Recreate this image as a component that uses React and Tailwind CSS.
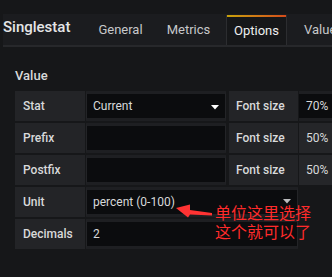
import React from 'react';

const Caret = ({ className }) => (
  <svg width="8" height="5" viewBox="0 0 8 5" className={className}>
    <path d="M0 0 L8 0 L4 4.5 Z" fill="currentColor" />
  </svg>
);

const Label = ({ children, w = 'w-[70px]', pl = 'pl-[8px]' }) => (
  <div className={`${w} ${pl} h-[30px] shrink-0 flex items-center bg-[#232427] text-[#d8d9da] font-medium`}>
    {children}
  </div>
);

const Input = ({ children, w, caret }) => (
  <div className={`${w} h-[30px] shrink-0 flex items-center pl-[6px] bg-[#0b0c0e] border-y-[3px] border-x border-y-[#1e1f22] border-x-[#232427] text-[#d8d9da] relative`}>
    {children}
    {caret}
  </div>
);

const App = () => {
  return (
    <div className="w-[332px] h-[277px] bg-[#161719] overflow-hidden relative font-['Roboto','Liberation_Sans',sans-serif] text-[12px]">
      <div className="h-[14px]" />

      {/* Header with tabs */}
      <div className="ml-[3px] h-[33px] bg-[#1b1c1f] border-b-2 border-[#27282b] flex items-end">
        <div className="w-[87px] shrink-0 h-full flex items-center pb-[5px] text-[15px] font-medium text-[#e4e5e6]">Singlestat</div>
        <div className="flex shrink-0 gap-[7px] text-[13px] text-[#c7c8ca]">
          <div className="w-[61px] shrink-0 h-[30px] flex items-center justify-center">General</div>
          <div className="w-[61px] shrink-0 h-[30px] flex items-center justify-center">Metrics</div>
          <div className="w-[61px] shrink-0 h-[30px] flex flex-col -mb-[2px] bg-[#161719] border-x border-[#2c2d30]">
            <div className="h-[2px] bg-gradient-to-r from-[#c7a10a] to-[#d44a1a]" />
            <div className="flex-1 flex items-center justify-center text-[#eeeff0]">Options</div>
          </div>
          <div className="w-[61px] shrink-0 h-[30px] flex items-center pl-[10px]">Value</div>
        </div>
      </div>

      {/* Value section */}
      <div className="pl-[15px]">
        <div className="h-[44px] flex items-center pt-[13px] text-[13px] font-medium text-[#d8d9da]">Value</div>

        <div className="flex flex-col gap-[2px]">
          <div className="flex">
            <Label>Stat</Label>
            <div className="w-px" />
            <Input w="w-[140px]" caret={<Caret className="absolute right-[6px] top-[11px] text-white" />}>Current</Input>
            <div className="w-[3px]" />
            <Label w="w-[69px]" pl="pl-[7px]">Font size</Label>
            <div className="w-px" />
            <div className="flex-1 h-[30px] flex items-center pl-[7px] bg-[#0b0c0e] border-y-[3px] border-[#1e1f22] text-[#d8d9da]">70%</div>
          </div>
          <div className="flex">
            <Label>Prefix</Label>
            <div className="w-px" />
            <Input w="w-[140px]" />
            <div className="w-[3px]" />
            <Label w="w-[69px]" pl="pl-[7px]">Font size</Label>
            <div className="w-px" />
            <div className="flex-1 h-[30px] flex items-center pl-[7px] bg-[#252629] text-[#d8d9da]">50%</div>
          </div>
          <div className="flex">
            <Label>Postfix</Label>
            <div className="w-px" />
            <Input w="w-[140px]" />
            <div className="w-[3px]" />
            <Label w="w-[69px]" pl="pl-[7px]">Font size</Label>
            <div className="w-px" />
            <div className="flex-1 h-[30px] flex items-center pl-[7px] bg-[#252629] text-[#d8d9da]">50%</div>
          </div>
          <div className="flex">
            <Label>Unit</Label>
            <div className="w-px" />
            <Input w="w-[212px]" caret={<Caret className="absolute right-[6px] top-[9px] text-[#bbbcbe]" />}>percent (0-100)</Input>
          </div>
          <div className="flex">
            <Label>Decimals</Label>
            <div className="w-px" />
            <Input w="w-[212px]">2</Input>
          </div>
        </div>
      </div>

      {/* Annotation */}
      <svg className="absolute left-0 top-0" width="332" height="277" viewBox="0 0 332 277">
        <polygon points="176,208 190,204.5 190,210 212,213 212,215.5 190,214.5 188,217.5" fill="#ff3333" />
      </svg>
      <div className="absolute left-[215px] top-[203px] text-[16px] leading-[19px] text-[#ff2b2b] font-['Noto_Sans_CJK_SC',sans-serif]">
        <div>单位这里选择</div>
        <div>这个就可以了</div>
      </div>
    </div>
  );
};

export default App;
